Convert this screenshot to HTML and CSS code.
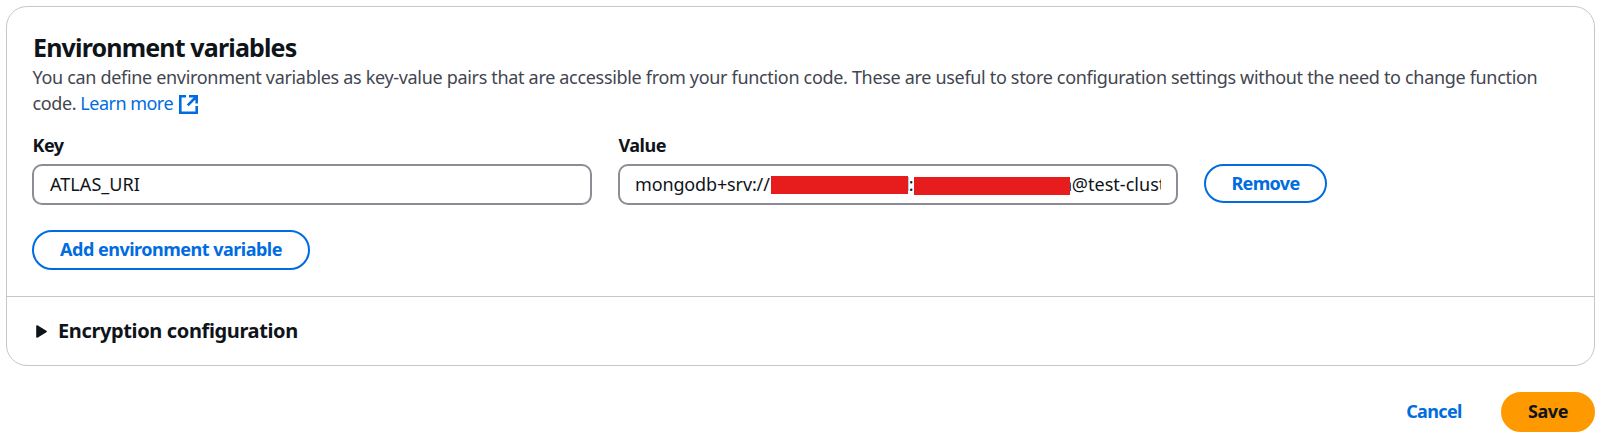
FILE: index.html
```html
<!DOCTYPE html>
<html lang="en">
<head>
<meta charset="utf-8">
<title>Environment variables</title>
<link rel="stylesheet" href="styles.css">
</head>
<body>
<main class="page">
  <section class="card">
    <div class="card-body">
      <h2 class="title"><span class="title-text">Environment variables</span></h2>
      <p class="description"><span class="desc-first">You can define environment variables as key-value pairs that are accessible from your function code. These are useful to store configuration settings without the need to change function</span><br><span class="desc-second">code. <a class="link" href="#">Learn more</a></span><svg class="external" viewBox="0 0 19 19" fill="none" stroke="currentColor" stroke-width="2.6"><path d="M7 1.3H1.3v16.4h16.4V11M10 1.3h7.7V8.6M17.5 1.5 8.7 10.3"/></svg></p>
      <div class="row">
        <div class="field">
          <label class="label label-key">Key</label>
          <div class="input"><span class="key-text">ATLAS_URI</span></div>
        </div>
        <div class="field">
          <label class="label label-value">Value</label>
          <div class="input">
            <div class="value">
              <span class="scheme">mongodb+srv://</span>
              <span class="redacted redacted-user"></span>
              <span class="separator">l:</span>
              <span class="redacted redacted-pass"></span>
              <span class="host"><span class="tail">n</span>@test-cluster</span>
            </div>
          </div>
        </div>
        <button class="button remove">Remove</button>
      </div>
      <button class="button add">Add environment variable</button>
    </div>
    <div class="expander">
      <svg class="caret" viewBox="0 0 11 13"><path d="M1 1v11l9-5.5z" fill="currentColor" stroke="currentColor" stroke-width="1.6" stroke-linejoin="round"/></svg>
      <h3 class="expander-title">Encryption configuration</h3>
    </div>
  </section>
  <footer class="actions">
    <button class="button cancel">Cancel</button>
    <button class="button save">Save</button>
  </footer>
</main>
</body>
</html>
```
FILE: styles.css
```css
* { box-sizing: border-box; }
body { margin: 0; background: #fff; color: #0f141a; font: 18px/26px "Noto Sans", sans-serif; }
.page { padding: 6px 7px 4px 6px; }
.card { height: 360px; border: 1px solid #c6c6cd; border-radius: 21px; }
.card-body { height: 290px; padding: 24px 25px 0; border-bottom: 1px solid #c6c6cd; }
.title { margin: 0 0 1px; font-size: 25px; line-height: 32px; font-weight: 700; letter-spacing: -0.84px; padding-left: 1px; }
.description { margin: 0; padding-left: 0.5px; color: #424650; white-space: nowrap; height: 56px; }
.desc-first { letter-spacing: -0.32px; }
.desc-second { letter-spacing: -0.4px; }
.link { color: #006ce0; text-decoration: none; letter-spacing: -0.52px; }
.external { width: 19px; height: 19px; margin-left: 6px; vertical-align: -4px; color: #006ce0; }
.row { display: flex; gap: 26px; height: 85px; margin-bottom: 25px; }
.field { width: 560px; }
.label { display: block; height: 44px; padding: 12px 0 0 0.5px; font-weight: 700; letter-spacing: -0.5px; }
.input { height: 41px; border: 2px solid #8c8c94; border-radius: 10px; padding: 5px 15px 0 16px; line-height: 26px; letter-spacing: 0.05px; }
.value { display: flex; overflow: hidden; height: 27px; white-space: pre; margin-left: -1px; }
.scheme { width: 136px; flex: none; letter-spacing: -0.14px; }
.redacted { flex: none; background: #e71d1d; height: 18px; position: relative; }
.redacted-user { width: 137px; margin-top: 5px; }
.redacted-pass { width: 156px; margin-top: 6px; }
.separator { flex: none; width: 9px; margin-left: -3px; letter-spacing: -0.8px; }
.host { flex: none; margin-left: -9px; letter-spacing: 0.03px; }
.tail { letter-spacing: -0.4px; }
.button { display: flex; align-items: center; justify-content: center; padding: 0 0 2px; font: 700 18px/26px "Noto Sans", sans-serif; letter-spacing: -0.5px; color: #006ce0; background: #fff; border: 2px solid #006ce0; border-radius: 20px; height: 40px; white-space: nowrap; }
.remove { width: 123px; height: 39px; margin-top: 44px; letter-spacing: -0.65px; }
.add { width: 278px; }
.expander { display: flex; align-items: center; height: 68px; padding: 0 29px; }
.caret { width: 11px; height: 13px; color: #0f141a; margin-right: 11px; }
.expander-title { margin: 0; font-size: 20px; line-height: 26px; font-weight: 700; letter-spacing: -0.37px; white-space: nowrap; padding-bottom: 1px; }
.actions { display: flex; justify-content: flex-end; gap: 12px; padding-top: 26px; }
.cancel { width: 110px; border-color: transparent; letter-spacing: -0.65px; }
.save { width: 94px; color: #0f141a; background: #ff9900; border-color: #ff9900; letter-spacing: -0.4px; }
```
